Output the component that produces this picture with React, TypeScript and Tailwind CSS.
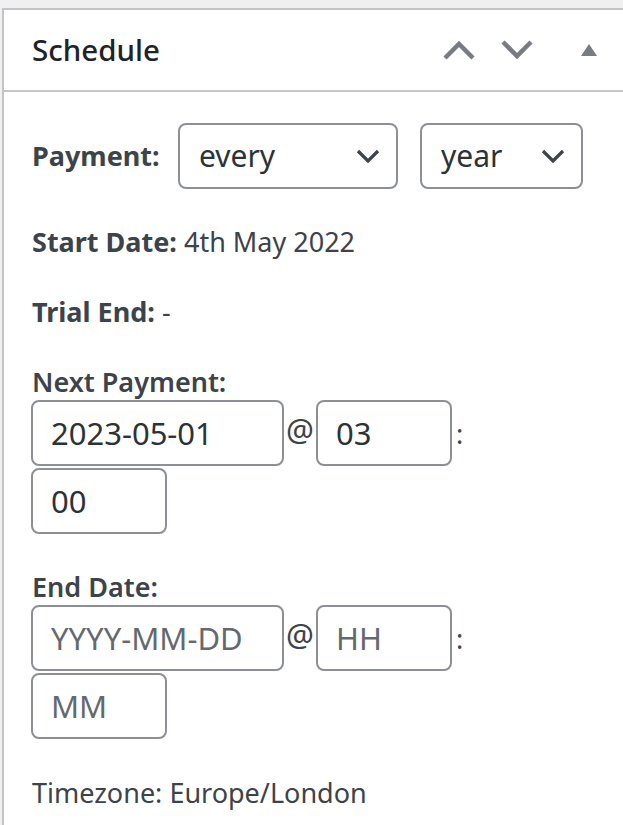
const inputCls =
  "h-[66px] rounded-[8px] border-2 border-[#8c8f94] bg-white px-[18px] text-[31px] text-[#2c3338] placeholder:text-[#646970] outline-none";

function Chevron({ up = false }: { up?: boolean }) {
  return (
    <svg width="34" height="22" viewBox="0 0 34 22" fill="none">
      <path
        d={up ? "M3 19 L17 5 L31 19" : "M3 3 L17 17 L31 3"}
        stroke="#787c82"
        strokeWidth="4.5"
      />
    </svg>
  );
}

function SelectBox({ value, width }: { value: string; width: string }) {
  return (
    <div
      className={`${width} h-[66px] rounded-[8px] border-2 border-[#8c8f94] bg-white flex items-center justify-between pl-[19px] pr-[16px] text-[30px] text-[#2c3338]`}
    >
      <span>{value}</span>
      <svg width="24" height="14" viewBox="0 0 24 14" fill="none">
        <path d="M2 2 L12 12 L22 2" stroke="#3c434a" strokeWidth="3.2" />
      </svg>
    </div>
  );
}

function DateTime({
  date,
  hour,
  minute,
}: {
  date?: string;
  hour?: string;
  minute?: string;
}) {
  return (
    <div className="flex flex-wrap w-[440px] gap-y-[2px] -ml-[1px]">
      <input
        className={`${inputCls} w-[253px]`}
        defaultValue={date}
        placeholder="YYYY-MM-DD"
      />
      <span className="w-[32px] pl-[2px] pt-[14px] text-[31px] leading-none">@</span>
      <input
        className={`${inputCls} w-[136px]`}
        defaultValue={hour}
        placeholder="HH"
      />
      <span className="pl-[4px] pt-[20px] text-[27px] leading-none">:</span>
      <input
        className={`${inputCls} w-[136px]`}
        defaultValue={minute}
        placeholder="MM"
      />
    </div>
  );
}

export default function App() {
  return (
    <div
      className="min-h-[825px] bg-[#f0f0f1] pt-[8px] pl-[2px] overflow-hidden text-[#3c434a]"
      style={{ fontFamily: '"Noto Sans", "Open Sans", sans-serif' }}
    >
      <div className="w-[660px] min-h-[830px] border-2 border-[#c3c4c7] bg-white">
        <div className="h-[82px] border-b-2 border-[#c3c4c7] flex items-center pl-[28px]">
          <h2 className="text-[29.5px] font-medium text-[#1d2327] w-[410px]">
            Schedule
          </h2>
          <div className="flex items-center gap-[24px]">
            <Chevron up />
            <Chevron />
          </div>
          <svg className="ml-[46px]" width="18" height="14" viewBox="0 0 18 14">
            <path d="M9 1 L17 13 L1 13 Z" fill="#787c82" />
          </svg>
        </div>

        <div className="pl-[28px] pt-[31px] text-[27px] leading-[36px]">
          <div className="flex items-center">
            <strong className="w-[146px]">Payment:</strong>
            <SelectBox value="every" width="w-[220px]" />
            <div className="w-[22px]" />
            <SelectBox value="year" width="w-[163px]" />
          </div>

          <p className="mt-[35px]">
            <strong>Start Date:</strong> 4th May 2022
          </p>
          <p className="mt-[34px]">
            <strong>Trial End:</strong> -
          </p>

          <p className="mt-[34px] font-semibold">Next Payment:</p>
          <DateTime date="2023-05-01" hour="03" minute="00" />

          <p className="mt-[35px] font-semibold">End Date:</p>
          <DateTime />

          <p className="mt-[36px]">Timezone: Europe/London</p>
        </div>
      </div>
    </div>
  );
}
